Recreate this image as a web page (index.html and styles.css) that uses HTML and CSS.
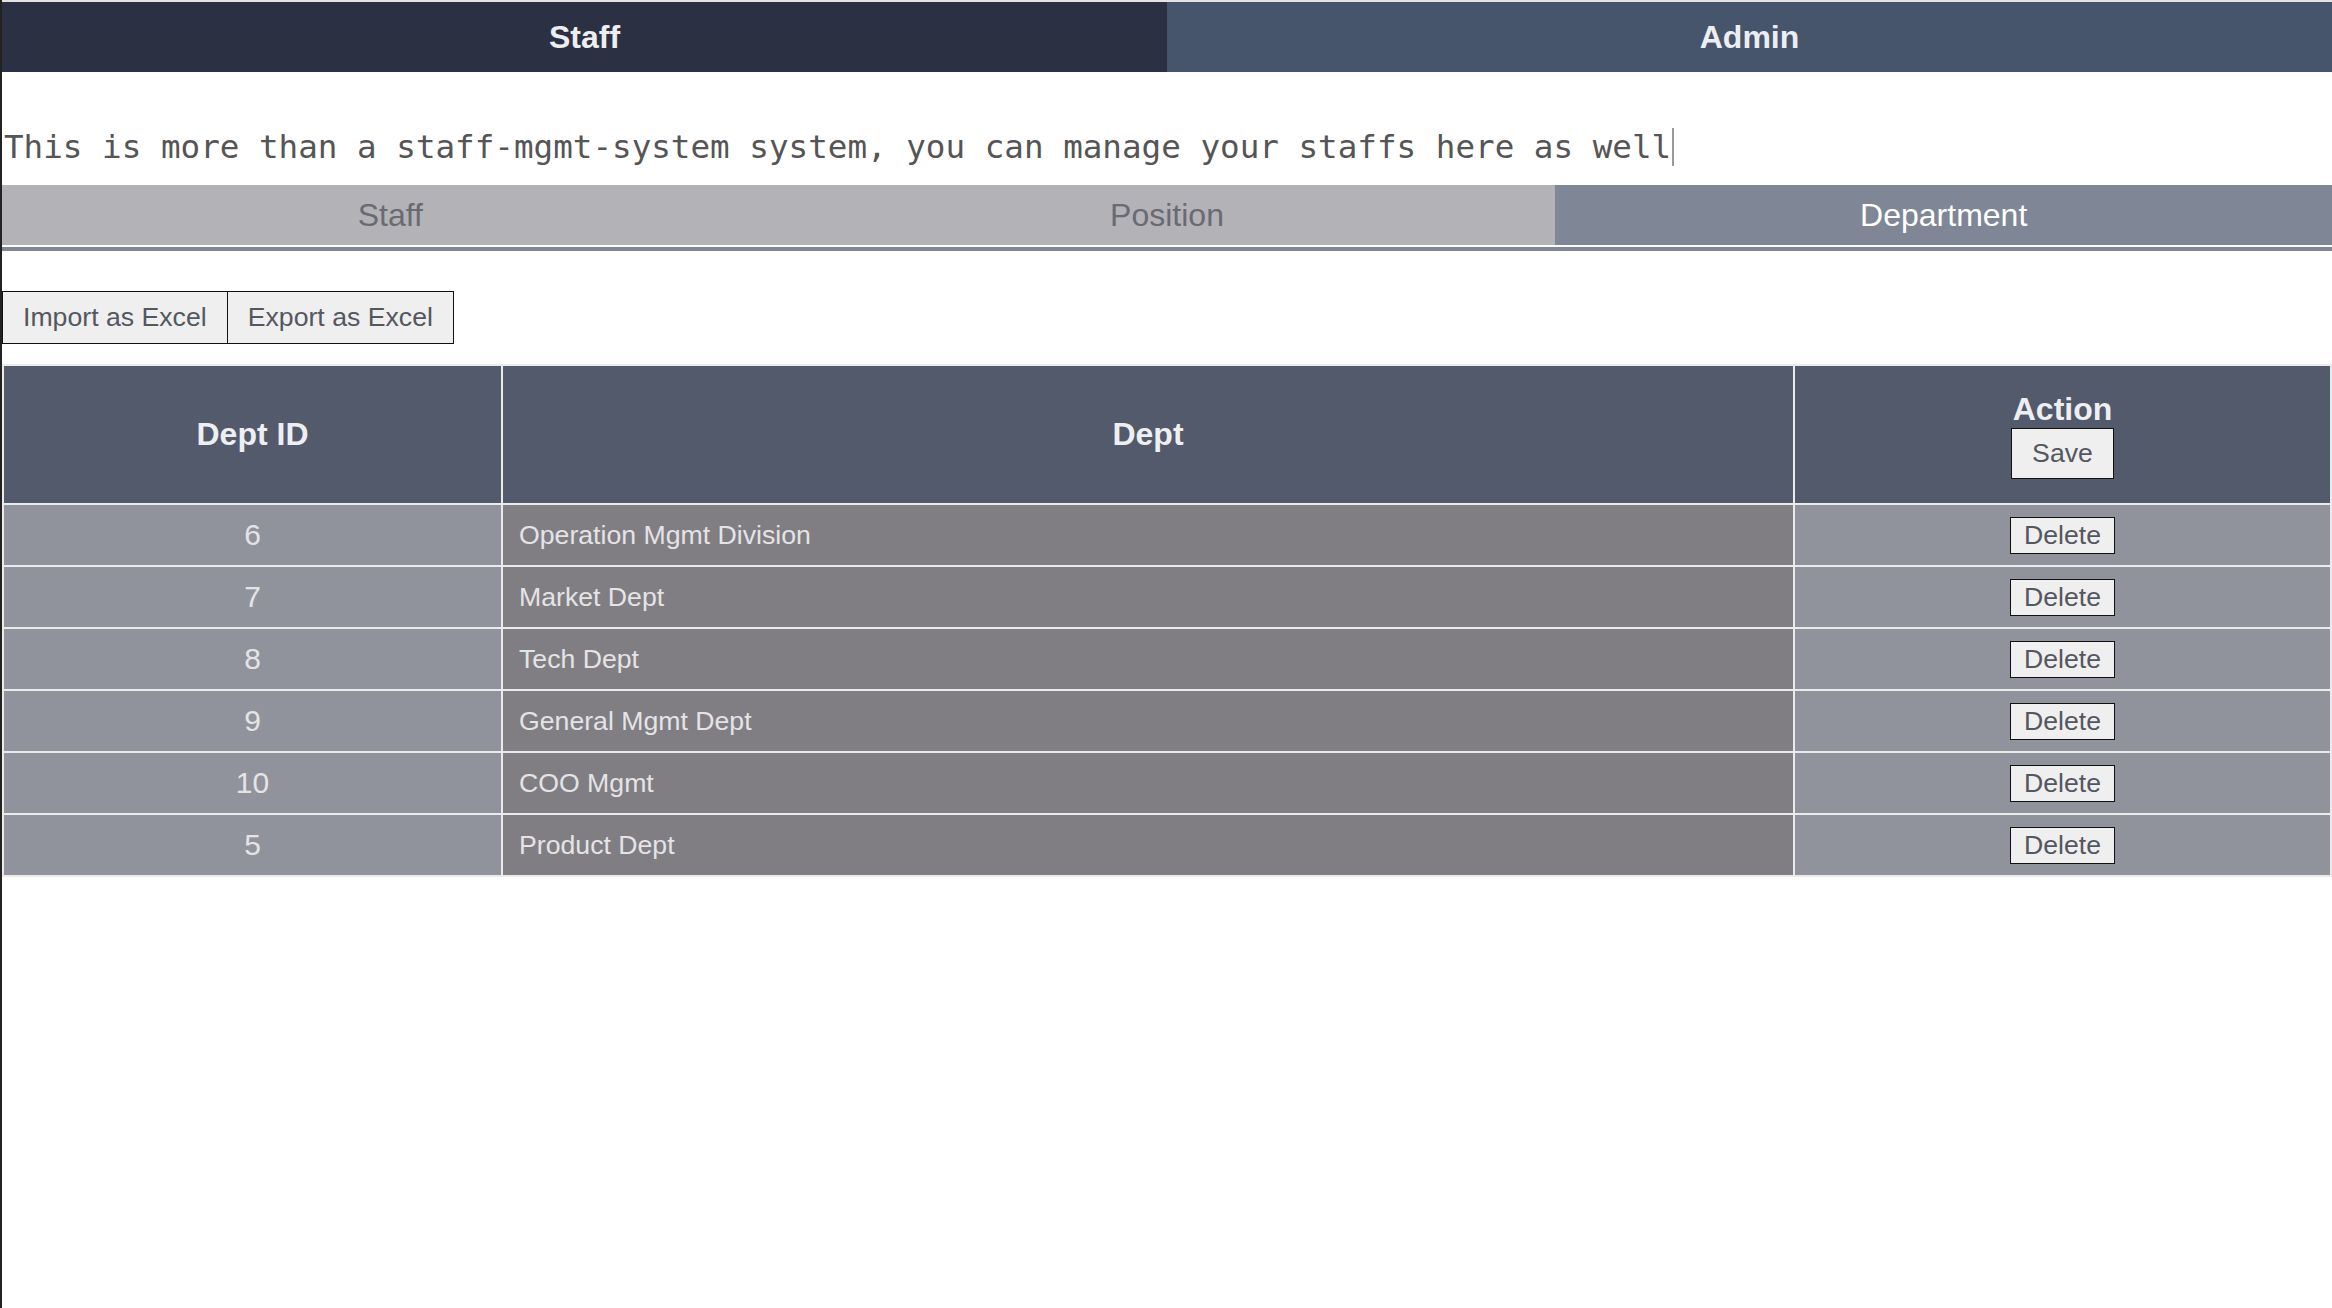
FILE: index.html
```html
<!DOCTYPE html>
<html>
<head>
<meta charset="utf-8">
<title>Staff Mgmt System</title>
<link rel="stylesheet" href="styles.css">
</head>
<body>
<div class="frame">
  <nav class="topnav">
    <a class="topnav-item topnav-item--active">Staff</a>
    <a class="topnav-item">Admin</a>
  </nav>
  <p class="intro"><span class="typing">This is more than a staff-mgmt-system system, you can manage your staffs here as well</span></p>
  <div class="subtabs">
    <div class="subtab">Staff</div>
    <div class="subtab">Position</div>
    <div class="subtab subtab--active">Department</div>
  </div>
  <div class="subtabs-line"></div>
  <div class="toolbar">
    <button class="btn btn--tool">Import as Excel</button>
    <button class="btn btn--tool btn--joined">Export as Excel</button>
  </div>
  <table class="dept-table">
    <colgroup>
      <col class="col-id">
      <col class="col-name">
      <col class="col-action">
    </colgroup>
    <thead>
      <tr>
        <th>Dept ID</th>
        <th>Dept</th>
        <th><div class="action-title">Action</div><button class="btn btn--save">Save</button></th>
      </tr>
    </thead>
    <tbody>
      <tr><td class="cell-id">6</td><td class="cell-name">Operation Mgmt Division</td><td class="cell-action"><button class="btn btn--del">Delete</button></td></tr>
      <tr><td class="cell-id">7</td><td class="cell-name">Market Dept</td><td class="cell-action"><button class="btn btn--del">Delete</button></td></tr>
      <tr><td class="cell-id">8</td><td class="cell-name">Tech Dept</td><td class="cell-action"><button class="btn btn--del">Delete</button></td></tr>
      <tr><td class="cell-id">9</td><td class="cell-name">General Mgmt Dept</td><td class="cell-action"><button class="btn btn--del">Delete</button></td></tr>
      <tr><td class="cell-id">10</td><td class="cell-name">COO Mgmt</td><td class="cell-action"><button class="btn btn--del">Delete</button></td></tr>
      <tr><td class="cell-id">5</td><td class="cell-name">Product Dept</td><td class="cell-action"><button class="btn btn--del">Delete</button></td></tr>
    </tbody>
  </table>
</div>
</body>
</html>
```
FILE: styles.css
```css
* { box-sizing: border-box; }
html, body { margin: 0; padding: 0; background: #ffffff; }
body {
  font-family: "Liberation Sans", Arial, Helvetica, sans-serif;
  min-height: 1308px;
  border-left: 2px solid #222222;
}
.frame {
  border-top: 2px solid #e4e4e4;
  min-height: 1306px;
}
.topnav {
  display: flex;
  height: 70px;
}
.topnav-item {
  flex: 1;
  display: flex;
  align-items: center;
  justify-content: center;
  background: #46556b;
  color: #eceef2;
  font-size: 32px;
  font-weight: bold;
}
.topnav-item--active { background: #2b3142; }
.intro {
  margin: 55px 0 18px 0;
  padding-left: 2px;
  line-height: 40px;
  height: 40px;
  font-family: "DejaVu Sans Mono", "Liberation Mono", monospace;
  font-size: 32.6px;
  color: #555555;
  white-space: nowrap;
}
.typing {
  border-right: 2px solid #9a9a9a;
  padding-right: 1px;
}
.subtabs {
  display: flex;
  height: 60px;
}
.subtab {
  flex: 1;
  display: flex;
  align-items: center;
  justify-content: center;
  background: #b3b2b7;
  color: #6a6a72;
  font-size: 32px;
}
.subtab--active { background: #7f8696; color: #ffffff; }
.subtabs-line {
  margin-top: 2px;
  height: 4px;
  background: #7f8797;
}
.toolbar {
  display: flex;
  margin-top: 40px;
}
.btn {
  font-family: "Liberation Sans", Arial, Helvetica, sans-serif;
  font-size: 26.67px;
  line-height: 31px;
  color: #55575f;
  background: #efefef;
  border: 1px solid #111111;
  border-radius: 0;
  margin: 0;
}
.btn--tool { padding: 10px 20px; }
.btn--joined { margin-left: -1px; }
.btn--save { padding: 9px 20px; }
.btn--del { padding: 2px 13px; }
.dept-table {
  margin-top: 20px;
  width: 2330px;
  table-layout: fixed;
  border-collapse: separate;
  border-spacing: 2px;
  background: #ebebeb;
}
.col-id { width: 497px; }
.col-name { width: 1290px; }
.dept-table th {
  background: #535a6b;
  color: #eeeff2;
  font-size: 32px;
  font-weight: bold;
  height: 137px;
  padding: 0;
  text-align: center;
  vertical-align: middle;
}
.action-title { line-height: 37px; margin-bottom: 0; }
.dept-table td {
  height: 60px;
  padding: 0;
  vertical-align: middle;
  color: #e4e4e6;
}
.cell-id {
  background: #90939b;
  text-align: center;
  font-size: 30px;
}
.cell-name {
  background: #807e83;
  font-size: 26.67px;
  padding-left: 16px !important;
}
.cell-action {
  background: #90939b;
  text-align: center;
}
```
